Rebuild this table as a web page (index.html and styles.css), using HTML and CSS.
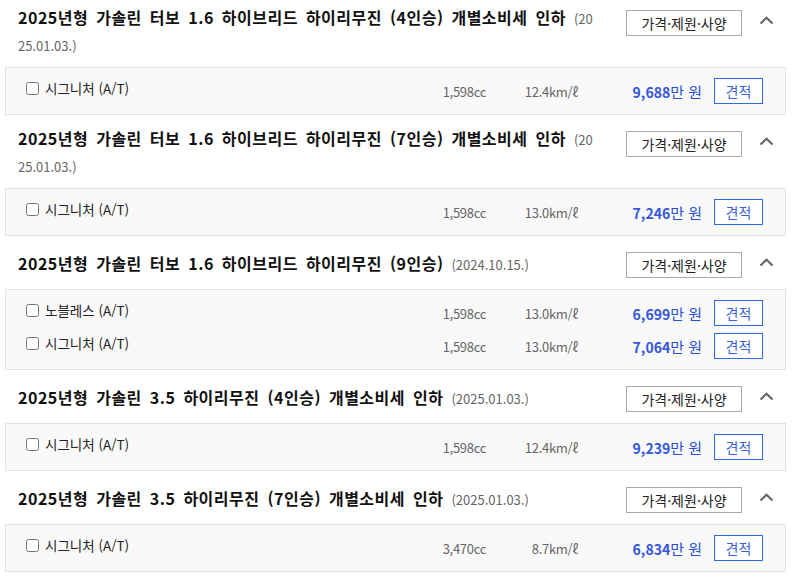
FILE: index.html
```html
<!DOCTYPE html>
<html lang="ko">
<head>
<meta charset="utf-8">
<title>가격표</title>
<link rel="stylesheet" href="styles.css">
</head>
<body>
<div class="list">

  <section class="group">
    <div class="head">
      <h3 class="title">2025년형 가솔린 터보 1.6 하이브리드 하이리무진 (4인승) 개별소비세 인하 <span class="date">(2025.01.03.)</span></h3>
      <div class="actions">
        <button class="spec-btn" type="button">가격·제원·사양</button>
        <span class="toggle"><svg width="15" height="9" viewBox="0 0 15 9"><path d="M1.5 7.5 L7.5 1.8 L13.5 7.5" fill="none" stroke="#666" stroke-width="2.2"/></svg></span>
      </div>
    </div>
    <div class="box">
      <div class="row">
        <label class="name"><input type="checkbox">시그니처 (A/T)</label>
        <span class="cc">1,598cc</span>
        <span class="km">12.4km/ℓ</span>
        <span class="price"><b>9,688</b>만 원</span>
        <button class="est" type="button">견적</button>
      </div>
    </div>
  </section>

  <section class="group">
    <div class="head">
      <h3 class="title">2025년형 가솔린 터보 1.6 하이브리드 하이리무진 (7인승) 개별소비세 인하 <span class="date">(2025.01.03.)</span></h3>
      <div class="actions">
        <button class="spec-btn" type="button">가격·제원·사양</button>
        <span class="toggle"><svg width="15" height="9" viewBox="0 0 15 9"><path d="M1.5 7.5 L7.5 1.8 L13.5 7.5" fill="none" stroke="#666" stroke-width="2.2"/></svg></span>
      </div>
    </div>
    <div class="box">
      <div class="row">
        <label class="name"><input type="checkbox">시그니처 (A/T)</label>
        <span class="cc">1,598cc</span>
        <span class="km">13.0km/ℓ</span>
        <span class="price"><b>7,246</b>만 원</span>
        <button class="est" type="button">견적</button>
      </div>
    </div>
  </section>

  <section class="group">
    <div class="head">
      <h3 class="title">2025년형 가솔린 터보 1.6 하이브리드 하이리무진 (9인승) <span class="date">(2024.10.15.)</span></h3>
      <div class="actions">
        <button class="spec-btn" type="button">가격·제원·사양</button>
        <span class="toggle"><svg width="15" height="9" viewBox="0 0 15 9"><path d="M1.5 7.5 L7.5 1.8 L13.5 7.5" fill="none" stroke="#666" stroke-width="2.2"/></svg></span>
      </div>
    </div>
    <div class="box">
      <div class="row">
        <label class="name"><input type="checkbox">노블레스 (A/T)</label>
        <span class="cc">1,598cc</span>
        <span class="km">13.0km/ℓ</span>
        <span class="price"><b>6,699</b>만 원</span>
        <button class="est" type="button">견적</button>
      </div>
      <div class="row">
        <label class="name"><input type="checkbox">시그니처 (A/T)</label>
        <span class="cc">1,598cc</span>
        <span class="km">13.0km/ℓ</span>
        <span class="price"><b>7,064</b>만 원</span>
        <button class="est" type="button">견적</button>
      </div>
    </div>
  </section>

  <section class="group">
    <div class="head">
      <h3 class="title">2025년형 가솔린 3.5 하이리무진 (4인승) 개별소비세 인하 <span class="date">(2025.01.03.)</span></h3>
      <div class="actions">
        <button class="spec-btn" type="button">가격·제원·사양</button>
        <span class="toggle"><svg width="15" height="9" viewBox="0 0 15 9"><path d="M1.5 7.5 L7.5 1.8 L13.5 7.5" fill="none" stroke="#666" stroke-width="2.2"/></svg></span>
      </div>
    </div>
    <div class="box">
      <div class="row">
        <label class="name"><input type="checkbox">시그니처 (A/T)</label>
        <span class="cc">1,598cc</span>
        <span class="km">12.4km/ℓ</span>
        <span class="price"><b>9,239</b>만 원</span>
        <button class="est" type="button">견적</button>
      </div>
    </div>
  </section>

  <section class="group">
    <div class="head">
      <h3 class="title">2025년형 가솔린 3.5 하이리무진 (7인승) 개별소비세 인하 <span class="date">(2025.01.03.)</span></h3>
      <div class="actions">
        <button class="spec-btn" type="button">가격·제원·사양</button>
        <span class="toggle"><svg width="15" height="9" viewBox="0 0 15 9"><path d="M1.5 7.5 L7.5 1.8 L13.5 7.5" fill="none" stroke="#666" stroke-width="2.2"/></svg></span>
      </div>
    </div>
    <div class="box">
      <div class="row">
        <label class="name"><input type="checkbox">시그니처 (A/T)</label>
        <span class="cc">3,470cc</span>
        <span class="km">8.7km/ℓ</span>
        <span class="price"><b>6,834</b>만 원</span>
        <button class="est" type="button">견적</button>
      </div>
    </div>
  </section>

</div>
</body>
</html>
```

FILE: styles.css
```css
* { box-sizing: border-box; }

html, body {
  margin: 0;
  padding: 0;
  background: #fff;
}

body {
  font-family: "Noto Sans CJK KR", "Noto Sans", sans-serif;
  color: #111;
  overflow: hidden;
}

.list {
  margin: 0 7px 0 5px;
}

.head {
  display: flex;
  align-items: center;
  padding: 10px 0 9px 13px;
}

.group:first-child .head {
  padding-top: 4px;
}

.title {
  flex: 1;
  margin: 0 33px 0 0;
  font-size: 16px;
  font-weight: 700;
  line-height: 27px;
  letter-spacing: 0.5px;
  word-spacing: 3px;
  color: #111;
  word-break: break-all;
}

.date {
  font-size: 13px;
  font-weight: 400;
  line-height: 16px;
  letter-spacing: 0;
  word-spacing: 0;
  color: #666;
}

.actions {
  align-self: flex-start;
  display: flex;
  align-items: flex-start;
  height: 34px;
}

.spec-btn {
  margin-top: 6px;
  width: 116px;
  height: 26px;
  padding: 0;
  border: 1px solid #aaa;
  background: #fff;
  font-family: inherit;
  font-size: 14px;
  color: #222;
  line-height: 24px;
}

.toggle {
  width: 44px;
  height: 34px;
  display: flex;
  align-items: center;
  justify-content: center;
  padding-left: 4px;
  padding-bottom: 2px;
}

.toggle svg { display: block; }

.box {
  border: 1px solid #e2e2e2;
  background: #f9f9f9;
  padding: 10px 22px 10px 20px;
  display: flex;
  flex-direction: column;
  gap: 7px;
}

.row {
  display: flex;
  align-items: center;
  height: 26px;
}

.name {
  flex: 1;
  align-self: flex-start;
  display: flex;
  align-items: center;
  font-size: 13.5px;
  line-height: 20px;
  color: #222;
}

.name input {
  margin: 0 6px 0 0;
  width: 13px;
  height: 13px;
}

.cc, .km {
  font-size: 13px;
  color: #666;
  text-align: right;
  letter-spacing: -0.3px;
}

.cc { width: 80px; }
.km { width: 92px; }

.price {
  width: 124px;
  text-align: right;
  font-size: 15px;
  color: #2b4fd3;
}

.price b {
  font-size: 14px;
  font-weight: 700;
  color: #3356dd;
}

.est {
  margin-left: 12px;
  width: 49px;
  height: 26px;
  padding: 0;
  border: 1px solid #2f6be0;
  background: #fff;
  font-family: inherit;
  font-size: 14px;
  color: #3b62d6;
  line-height: 24px;
}
```
